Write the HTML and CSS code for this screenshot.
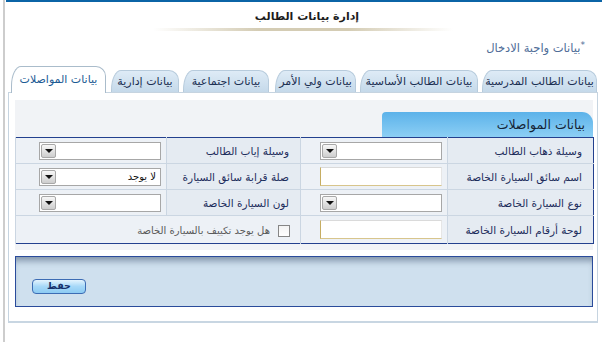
FILE: index.html
```html
<!DOCTYPE html>
<html lang="ar">
<head>
    <meta charset="UTF-8">
    <title>إدارة بيانات الطالب</title>
    <link rel="stylesheet" href="styles.css">
</head>
<body>
<div class="frame">
    <div class="topline"></div>
    <div class="page">

        <!-- Page title -->
        <div class="title">إدارة بيانات الطالب</div>
        <div class="title-line"></div>
        <div class="required"><sup>*</sup>بيانات واجبة الادخال</div>

        <!-- Tabs -->
        <div class="tabs">
            <div class="tab t1">بيانات الطالب المدرسية</div>
            <div class="tab t2">بيانات الطالب الأساسية</div>
            <div class="tab t3">بيانات ولي الأمر</div>
            <div class="tab t4">بيانات اجتماعية</div>
            <div class="tab t5">بيانات إدارية</div>
            <div class="tab active">بيانات المواصلات</div>
        </div>

        <div class="panel">
            <div class="section">
                <div class="section-head">بيانات المواصلات</div>
                <table class="form">
                    <colgroup>
                        <col class="c-label1">
                        <col class="c-input1">
                        <col class="c-label2">
                        <col class="c-input2">
                    </colgroup>
                    <tr>
                        <td class="lbl">وسيلة ذهاب الطالب</td>
                        <td class="inp"><div class="select"><span class="val"></span><span class="drop"></span></div></td>
                        <td class="lbl">وسيلة إياب الطالب</td>
                        <td class="inp"><div class="select"><span class="val"></span><span class="drop"></span></div></td>
                    </tr>
                    <tr>
                        <td class="lbl">اسم سائق السيارة الخاصة</td>
                        <td class="inp"><div class="textbox"></div></td>
                        <td class="lbl">صلة قرابة سائق السيارة</td>
                        <td class="inp"><div class="select"><span class="val">لا يوجد</span><span class="drop"></span></div></td>
                    </tr>
                    <tr>
                        <td class="lbl">نوع السيارة الخاصة</td>
                        <td class="inp"><div class="select"><span class="val"></span><span class="drop"></span></div></td>
                        <td class="lbl">لون السيارة الخاصة</td>
                        <td class="inp"><div class="select"><span class="val"></span><span class="drop"></span></div></td>
                    </tr>
                    <tr class="last">
                        <td class="lbl">لوحة أرقام السيارة الخاصة</td>
                        <td class="inp"><div class="textbox"></div></td>
                        <td class="inp check-cell" colspan="2">
                            <span class="checkbox"></span>
                            <span class="check-text">هل يوجد تكييف بالسيارة الخاصة</span>
                        </td>
                    </tr>
                </table>
            </div>

            <!-- Save bar -->
            <div class="save-bar">
                <button class="save">حفظ</button>
            </div>
        </div>
    </div>
</div>
</body>
</html>
```

FILE: styles.css
```css
body, html {
    margin: 0;
    padding: 0;
    background: #fff;
    font-family: 'DejaVu Sans', sans-serif;
    overflow: hidden;
}
.frame {
    margin-left: 3px;
    height: 342px;
    border-left: 2px solid #cdcdcd;
}
.topline {
    height: 2px;
    margin-left: 1px;
    background: #0b64a6;
}
.page {
    padding: 0 4px 0 3px;
}
.title {
    text-align: center;
    font-size: 11px;
    font-weight: bold;
    color: #1c1c1c;
    line-height: 16px;
    padding-top: 7px;
    padding-left: 8px;
}
.title-line {
    width: 300px;
    height: 3px;
    margin: 3px auto 0;
    background: linear-gradient(to right, rgba(255,255,255,0), #d4ccb4 35%, #d4ccb4 65%, rgba(255,255,255,0));
}
.required {
    direction: rtl;
    text-align: right;
    font-size: 11.5px;
    color: #4f6d98;
    line-height: 14px;
    margin-top: 10px;
    padding-right: 13px;
}
.required sup {
    font-size: 9px;
    vertical-align: 4px;
    line-height: 0;
}

/* tabs */
.tabs {
    direction: rtl;
    display: flex;
    align-items: flex-end;
    height: 26px;
    margin-top: 11px;
    padding-right: 1px;
    gap: 4px;
    position: relative;
    z-index: 1;
}
.tab {
    height: 22px;
    line-height: 22px;
    font-size: 11px;
    color: #1b2f52;
    text-align: center;
    white-space: nowrap;
    background: linear-gradient(#deebf6, #c5d9ea);
    border: 1px solid #b7cbdc;
    border-bottom: none;
    border-radius: 3px 10px 0 0;
    border-top-left-radius: 10px 20px;
    box-sizing: border-box;
}
.t1 { width: 115px; }
.t2 { width: 118px; }
.t3 { width: 81px; margin-left: 2px; }
.t4 { width: 86px; }
.t5 { width: 68px; }
.tab.active {
    width: 95px;
    height: 27px;
    line-height: 26px;
    margin-right: 1px;
    margin-bottom: -1px;
    background: #fff;
    border-color: #aabccb;
    color: #1c5a94;
}

/* panel */
.panel {
    border: 1px solid #c6d4e0;
    border-bottom: 2px solid #c8d6e2;
    padding: 7px 4px 14px 6px;
    background: #fff;
}
.section {
    background: #f1f3f6;
    padding: 12px 0 6px;
}
.section-head {
    direction: rtl;
    width: 211px;
    height: 25px;
    line-height: 26px;
    box-sizing: border-box;
    margin-left: auto;
    padding-right: 8px;
    font-size: 12.5px;
    color: #152436;
    background: linear-gradient(#5cb2e9, #8ccff5);
    border-radius: 4px 11px 0 0;
}
.form {
    direction: rtl;
    width: 100%;
    border-collapse: collapse;
    border: 1px solid #23408e;
    table-layout: fixed;
}
.c-label1 { width: 146px; }
.c-input1 { width: 147px; }
.c-label2 { width: 134px; }
.c-input2 { width: 151px; }
.form td {
    height: 25px;
    padding: 0;
    border-bottom: 1px solid #cbd6e2;
    border-left: 1px solid #cbd6e2;
}
.form tr.last td {
    height: 27px;
    border-bottom: none;
}
.lbl {
    background: #e5ebf2;
    text-align: right;
    padding-right: 11px !important;
    font-size: 10.5px;
    color: #1d2d5c;
    white-space: nowrap;
}
.inp {
    background: #edf1f6;
    padding-right: 5px !important;
}
.select {
    width: 122px;
    height: 18px;
    box-sizing: border-box;
    display: flex;
    align-items: center;
    background: #fff;
    border: 1px solid #a7a7a7;
}
.select .val {
    flex: 1;
    font-size: 10px;
    color: #111;
    padding-right: 4px;
}
.select .drop {
    width: 15px;
    height: 14px;
    margin-left: 1px;
    box-sizing: border-box;
    border: 1px solid #a8a8a8;
    border-radius: 2px;
    background: linear-gradient(#f7f7f7, #cdcdcd);
    display: flex;
    align-items: center;
    justify-content: center;
}
.select .drop::after {
    content: "";
    border-left: 4px solid transparent;
    border-right: 4px solid transparent;
    border-top: 4px solid #111;
}
.textbox {
    width: 122px;
    height: 19px;
    box-sizing: border-box;
    background: #fff;
    border-top: 1px solid #dadada;
    border-right: 1px solid #e6e6e6;
    border-left: 1px solid #c6ad62;
    border-bottom: 1px solid #d8c58c;
}
.check-cell {
    padding-right: 10px !important;
    white-space: nowrap;
}
.checkbox {
    display: inline-block;
    vertical-align: middle;
    width: 12px;
    height: 12px;
    box-sizing: border-box;
    border: 1px solid #868686;
    background: linear-gradient(#f3f3f3, #ffffff);
}
.check-text {
    vertical-align: middle;
    font-size: 10px;
    color: #5a5a5a;
    margin-right: 3px;
}

/* save bar */
.save-bar {
    margin-top: 6px;
    height: 51px;
    box-sizing: border-box;
    border: 1px solid #2a4b9b;
    background: #cfe0ee;
    box-shadow: inset 0 7px 6px -3px rgba(40, 60, 90, 0.45);
    padding: 17px 0 0 16px;
}
.save {
    width: 54px;
    height: 15px;
    padding: 0;
    font-family: 'DejaVu Sans', sans-serif;
    font-size: 9.5px;
    font-weight: bold;
    line-height: 12px;
    color: #14306a;
    border: 1px solid #3c6cb4;
    border-radius: 4px;
    background: linear-gradient(#e4f4fe, #a6d8f8 50%, #8ccbf3);
    cursor: pointer;
}
```
